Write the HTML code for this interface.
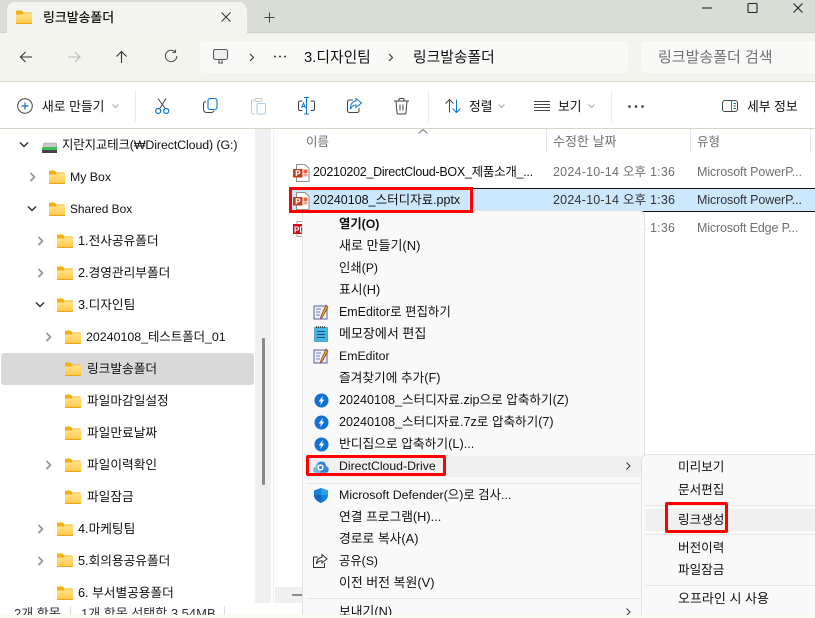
<!DOCTYPE html>
<html lang="ko"><head><meta charset="utf-8"><style>
html,body{margin:0;padding:0}
body{width:815px;height:618px;position:relative;overflow:hidden;background:#fff;font-family:"Liberation Sans","Noto Sans CJK KR",sans-serif;font-size:12.7px;color:#111}
.a{position:absolute}
.t{position:absolute;white-space:nowrap;line-height:18px;height:18px}
.m{font-size:12.8px}
.d{letter-spacing:.22px}
svg{position:absolute;overflow:visible}
.g{color:#707070}
</style></head><body>
<svg width="0" height="0" style="position:absolute"><defs>
<linearGradient id="fg" x1="0" y1="0" x2="0" y2="1"><stop offset="0" stop-color="#ffe28c"/><stop offset="1" stop-color="#fdc84a"/></linearGradient>
<symbol id="f" viewBox="0 0 16 14"><path d="M0 1.500Q0 .5 1 .5H5.500L7.500 2.500H15Q16 2.500 16 3.500V5H0Z" fill="#f6b015"/><path d="M0 4.500H6.500L8 3.300H16V12.500Q16 13.500 15 13.500H1Q0 13.500 0 12.500Z" fill="url(#fg)"/><path d="M0 12.800Q.2 13.500 1 13.500H15Q15.800 13.500 16 12.800" fill="none" stroke="#eea71a"/></symbol>
<symbol id="p" viewBox="0 0 20 18"><path d="M4.500 .5H13L17 4.500V17.500H4.500Z" fill="#fff" stroke="#8f8f8f"/><path d="M11.500 5.500H15.500V9H11.500Z" fill="#e8623a"/><path d="M11.500 9.500H15.500V12.500H11.500Z" fill="#f3a084"/><rect x="1" y="5" width="9.500" height="8.500" rx=".8" fill="#c43e1c"/><path d="M4.300 12V6.800H6Q7.800 6.800 7.800 8.300T6 9.800H4.300" fill="none" stroke="#fff" stroke-width="1.200"/></symbol>
<symbol id="b" viewBox="0 0 16 16"><circle cx="8" cy="8" r="7.500" fill="#1272d3"/><path d="M9.500 3L5 9H7.500L6.500 13L11 7H8.500Z" fill="#fff"/></symbol>
<symbol id="e" viewBox="0 0 16 16"><rect x="1" y="2" width="13" height="13" fill="#eef0fb" stroke="#5c5ca8"/><path d="M3 5H8M3 8H7M3 11H7" stroke="#7b7bb8"/><path d="M13 1L8 12L7.500 14.500L9.500 13L15 3Z" fill="#e8a33a" stroke="#7a3b10" stroke-width=".7"/></symbol>
<symbol id="r" viewBox="0 0 8 10"><path d="M1.500 1L5.500 5L1.500 9" fill="none" stroke="#8f8f8f" stroke-width="1.600"/></symbol>
<symbol id="d" viewBox="0 0 10 8"><path d="M1 1.500L5 5.500L9 1.500" fill="none" stroke="#333" stroke-width="1.500"/></symbol>
</defs></svg>

<!-- title bar -->
<div class="a" style="left:0;top:0;width:815px;height:33px;background:#d9ddd5"></div>
<div class="a" style="left:0;top:32px;width:815px;height:1px;background:#cfd1c6"></div>
<div class="a" style="left:7px;top:2px;width:240px;height:32px;background:#f3f4ef;border-radius:8px 8px 0 0"></div>
<svg style="left:16px;top:10px" width="16" height="14"><use href="#f" width="16" height="14"/></svg>
<div class="t" style="left:43px;top:9px;font-size:12.900px;font-weight:500">링크발송폴더</div>
<svg style="left:221px;top:12px" width="10" height="10"><path d="M.5.5L9.500 9.500M9.500.5L.5 9.500" stroke="#333"/></svg>
<svg style="left:264px;top:12px" width="11" height="11"><path d="M5.500.5V10.500M.5 5.500H10.500" stroke="#444"/></svg>
<svg style="left:702px;top:3px" width="100" height="14"><path d="M0 5H10" stroke="#222" stroke-width="1.100"/><rect x="46" y=".5" width="9" height="9" rx="1" fill="none" stroke="#222" stroke-width="1.100"/><path d="M91.500 .5L100.500 9.500M100.500 .5L91.500 9.500" stroke="#222" stroke-width="1.100"/></svg>

<!-- address row -->
<div class="a" style="left:0;top:33px;width:815px;height:48px;background:#f3f4ee"></div>
<div class="a" style="left:0;top:81px;width:815px;height:1px;background:#d5d6c9"></div>
<svg style="left:20px;top:50px" width="240" height="16">
<path d="M12 7H.5M5.500 2L.5 7L5.500 12" fill="none" stroke="#333" stroke-width="1.100"/>
<path d="M48 7H60M55 2L60 7L55 12" fill="none" stroke="#b8b8b8" stroke-width="1.100"/>
<path d="M101.500 13V1.500M96.500 6.500L101.500 1.500L106.500 6.500" fill="none" stroke="#333" stroke-width="1.100"/>
<path d="M155 1.800A5.700 5.700 0 1 0 156.800 6M155.500 -.5V2.500H152.500" fill="none" stroke="#555" stroke-width="1.100"/>
</svg>
<div class="a" style="left:200px;top:41px;width:428px;height:32px;background:#f9faf7;border-radius:4px"></div>
<div class="a" style="left:641px;top:41px;width:174px;height:32px;background:#f9faf7;border-radius:4px 0 0 4px"></div>
<svg style="left:213px;top:49px" width="16" height="16"><rect x=".5" y=".5" width="14" height="10" rx="2" fill="#f0f0f0" stroke="#5a5a5a" stroke-width="1.100"/><path d="M5 14H10M6 11V14M9 11V14" stroke="#5a5a5a" stroke-width="1.100"/></svg>
<svg style="left:249px;top:53px" width="6" height="9"><path d="M1 1L4.500 4.500L1 8" fill="none" stroke="#333" stroke-width="1.100"/></svg>
<svg style="left:274px;top:55px" width="12" height="3"><path d="M0 1.500H2M5 1.500H7M10 1.500H12" stroke="#333" stroke-width="1.500"/></svg>
<div class="t" style="left:304px;top:49px;font-size:14.800px">3.디자인팀</div>
<svg style="left:388px;top:53px" width="6" height="9"><path d="M1 1L4.500 4.500L1 8" fill="none" stroke="#333" stroke-width="1.100"/></svg>
<div class="t" style="left:413px;top:49px;font-size:14.800px">링크발송폴더</div>
<div class="t g" style="left:658px;top:49px;font-size:15px">링크발송폴더 검색</div>

<!-- toolbar -->
<div class="a" style="left:0;top:128px;width:815px;height:1px;background:#d5d6c9"></div>
<svg style="left:17px;top:98px" width="16" height="16"><circle cx="8" cy="8" r="7.300" fill="none" stroke="#444" stroke-width="1"/><path d="M8 4.500V11.500M4.500 8H11.500" stroke="#0a6fc4" stroke-width="1.200"/></svg>
<div class="t" style="left:42px;top:98px;font-size:12.800px">새로 만들기</div>
<svg style="left:112px;top:104px" width="7" height="5"><path d="M.5.5L3.500 3.500L6.500.5" fill="none" stroke="#a5a5a5"/></svg>
<div class="a" style="left:135px;top:90px;width:1px;height:32px;background:#ececec"></div>
<svg style="left:155px;top:98px" width="15" height="17"><path d="M3 .5L10.500 11M11 .5L4.500 11" fill="none" stroke="#444"/><circle cx="3.200" cy="13" r="2.500" fill="none" stroke="#0a78d4" stroke-width="1.200"/><circle cx="11.200" cy="13" r="2.500" fill="none" stroke="#0a78d4" stroke-width="1.200"/></svg>
<svg style="left:203px;top:98px" width="15" height="16"><rect x="5" y=".5" width="9" height="11" rx="2" fill="none" stroke="#0a78d4" stroke-width="1.100"/><path d="M3 3.500Q.5 4 .5 6V11Q.5 14.500 4 14.500H8Q10.500 14.500 11 12.500" fill="none" stroke="#444"/></svg>
<svg style="left:251px;top:98px" width="15" height="17"><path d="M4 2H2Q.5 2 .5 3.500V14.500Q.5 16 2 16H4" fill="none" stroke="#c9c9c9"/><rect x="4" y=".5" width="7" height="3" rx="1" fill="none" stroke="#c9c9c9"/><rect x="6" y="5.500" width="8.500" height="10.500" rx="1.500" fill="none" stroke="#a9cdea"/></svg>
<svg style="left:298px;top:97px" width="17" height="18"><path d="M4.500 4H2Q.5 4 .5 5.500V12Q.5 13.500 2 13.500H4.500M12.500 4H15Q16.500 4 16.500 5.500V12Q16.500 13.500 15 13.500H12.500" fill="none" stroke="#444"/><path d="M8.500.5V17M6 .5H11M6 17H11" fill="none" stroke="#0a78d4"/><path d="M3.500 11L5.500 6L7.500 11M4.200 9.500H6.800" fill="none" stroke="#0a78d4"/></svg>
<svg style="left:347px;top:98px" width="15" height="16"><path d="M6 2H2.500Q.5 2 .5 4V12.500Q.5 14.500 2.500 14.500H10Q12 14.500 12 12.500V10" fill="none" stroke="#444"/><path d="M9 .5L14.500 5L9 9.500V7Q5.500 7 3.500 11Q3.500 3.500 9 3Z" fill="none" stroke="#0a78d4"/></svg>
<svg style="left:394px;top:98px" width="16" height="17"><path d="M0 3H15M5 3V1.500Q5 .5 6 .5H9Q10 .5 10 1.500V3M2 3L3 14.500Q3 16 4.500 16H10.500Q12 16 12 14.500L13 3M6 6.500V12.500M9 6.500V12.500" fill="none" stroke="#444"/></svg>
<div class="a" style="left:428px;top:90px;width:1px;height:32px;background:#ececec"></div>
<svg style="left:445px;top:99px" width="17" height="14"><path d="M4.500 13.500V.5M.5 4.500L4.500.5L8.500 4.500" fill="none" stroke="#444"/><path d="M11.500.5V13.500M7.500 9.500L11.500 13.500L15.500 9.500" fill="none" stroke="#0a78d4"/></svg>
<div class="t" style="left:469px;top:98px;font-size:12.800px">정렬</div>
<svg style="left:498px;top:104px" width="7" height="5"><path d="M.5.5L3.500 3.500L6.500.5" fill="none" stroke="#a5a5a5"/></svg>
<svg style="left:534px;top:101px" width="16" height="10"><path d="M0 .5H16M0 3.500H16M0 6.500H16M0 9.500H16" stroke="#444"/></svg>
<div class="t" style="left:558px;top:98px;font-size:12.800px">보기</div>
<svg style="left:588px;top:104px" width="7" height="5"><path d="M.5.5L3.500 3.500L6.500.5" fill="none" stroke="#a5a5a5"/></svg>
<div class="a" style="left:611px;top:90px;width:1px;height:32px;background:#ececec"></div>
<svg style="left:628px;top:105px" width="16" height="3"><circle cx="1.500" cy="1.500" r="1.300" fill="#333"/><circle cx="8" cy="1.500" r="1.300" fill="#333"/><circle cx="14.500" cy="1.500" r="1.300" fill="#333"/></svg>
<svg style="left:722px;top:100px" width="16" height="12"><rect x=".5" y=".5" width="15" height="11" rx="2.500" fill="none" stroke="#444"/><path d="M9.500 .5V11.500" stroke="#0a78d4"/><path d="M11.500 3.500H14M11.500 6H14M11.500 8.500H14" stroke="#0a78d4"/></svg>
<div class="t" style="left:747px;top:98px;font-size:12.800px">세부 정보</div>

<!-- sidebar -->
<div class="a" style="left:255px;top:129px;width:16px;height:474px;background:#f0f0f0"></div>
<div class="a" style="left:262px;top:338px;width:3px;height:147px;background:#8a8a8a;border-radius:1px"></div>
<div class="a" style="left:273px;top:129px;width:1px;height:474px;background:#f1f1f1"></div>
<div class="a" style="left:1px;top:353px;width:253px;height:32px;background:#d9d9d9;border-radius:3px"></div>

<svg style="left:19px;top:141px" width="10" height="8"><use href="#d" width="10" height="8"/></svg>
<svg style="left:42px;top:142px" width="16" height="12"><rect x="1.500" y="1" width="13" height="5" rx="1" fill="#c9c9c9" stroke="#999" stroke-width=".6"/><rect x="0" y="5" width="15" height="3" fill="#3fbf5b"/><rect x="0" y="8" width="15" height="3" fill="#444"/></svg>
<div class="t" style="left:62px;top:136px;font-size:12.400px;letter-spacing:-.1px">지란지교테크(₩DirectCloud) (G:)</div>

<svg style="left:29px;top:172px" width="8" height="10"><use href="#r" width="8" height="10"/></svg>
<svg style="left:49px;top:170px" width="16" height="14"><use href="#f" width="16" height="14"/></svg>
<div class="t" style="left:70px;top:168px;font-size:12.300px">My Box</div>

<svg style="left:27px;top:205px" width="10" height="8"><use href="#d" width="10" height="8"/></svg>
<svg style="left:49px;top:202px" width="16" height="14"><use href="#f" width="16" height="14"/></svg>
<div class="t" style="left:70px;top:200px;font-size:11.900px">Shared Box</div>

<svg style="left:37px;top:236px" width="8" height="10"><use href="#r" width="8" height="10"/></svg>
<svg style="left:57px;top:234px" width="16" height="14"><use href="#f" width="16" height="14"/></svg>
<div class="t" style="left:78px;top:232px">1.전사공유폴더</div>

<svg style="left:37px;top:268px" width="8" height="10"><use href="#r" width="8" height="10"/></svg>
<svg style="left:57px;top:266px" width="16" height="14"><use href="#f" width="16" height="14"/></svg>
<div class="t" style="left:78px;top:264px">2.경영관리부폴더</div>

<svg style="left:35px;top:301px" width="10" height="8"><use href="#d" width="10" height="8"/></svg>
<svg style="left:57px;top:298px" width="16" height="14"><use href="#f" width="16" height="14"/></svg>
<div class="t" style="left:78px;top:296px">3.디자인팀</div>

<svg style="left:45px;top:332px" width="8" height="10"><use href="#r" width="8" height="10"/></svg>
<svg style="left:65px;top:330px" width="16" height="14"><use href="#f" width="16" height="14"/></svg>
<div class="t" style="left:86px;top:328px;font-size:12.400px">20240108_테스트폴더_01</div>

<svg style="left:65px;top:362px" width="16" height="14"><use href="#f" width="16" height="14"/></svg>
<div class="t" style="left:87px;top:360px">링크발송폴더</div>
<svg style="left:65px;top:394px" width="16" height="14"><use href="#f" width="16" height="14"/></svg>
<div class="t" style="left:87px;top:392px">파일마감일설정</div>
<svg style="left:65px;top:426px" width="16" height="14"><use href="#f" width="16" height="14"/></svg>
<div class="t" style="left:87px;top:424px">파일만료날짜</div>
<svg style="left:45px;top:460px" width="8" height="10"><use href="#r" width="8" height="10"/></svg>
<svg style="left:65px;top:458px" width="16" height="14"><use href="#f" width="16" height="14"/></svg>
<div class="t" style="left:87px;top:456px">파일이력확인</div>
<svg style="left:65px;top:490px" width="16" height="14"><use href="#f" width="16" height="14"/></svg>
<div class="t" style="left:87px;top:488px">파일잠금</div>

<svg style="left:37px;top:524px" width="8" height="10"><use href="#r" width="8" height="10"/></svg>
<svg style="left:57px;top:522px" width="16" height="14"><use href="#f" width="16" height="14"/></svg>
<div class="t" style="left:78px;top:520px">4.마케팅팀</div>
<svg style="left:37px;top:556px" width="8" height="10"><use href="#r" width="8" height="10"/></svg>
<svg style="left:57px;top:553px" width="16" height="14"><use href="#f" width="16" height="14"/></svg>
<div class="t" style="left:78px;top:552px">5.회의용공유폴더</div>
<svg style="left:57px;top:586px" width="16" height="14"><use href="#f" width="16" height="14"/></svg>
<div class="t" style="left:78px;top:584px">6. 부서별공용폴더</div>

<!-- list header -->
<svg style="left:418px;top:129px" width="10" height="5"><path d="M.5 4.500L5 .5L9.500 4.500" fill="none" stroke="#777"/></svg>
<div class="t g" style="left:306px;top:133px;font-size:12.500px">이름</div>
<div class="a" style="left:546px;top:129px;width:1px;height:24px;background:#e5e5e5"></div>
<div class="t g" style="left:553px;top:133px;font-size:13px">수정한 날짜</div>
<div class="a" style="left:690px;top:129px;width:1px;height:24px;background:#e5e5e5"></div>
<div class="t g" style="left:697px;top:133px;font-size:12.500px">유형</div>
<div class="a" style="left:810px;top:129px;width:1px;height:24px;background:#e5e5e5"></div>

<!-- rows -->
<svg style="left:292px;top:164px" width="20" height="18"><use href="#p" width="20" height="18"/></svg>
<div class="t" style="left:313px;top:163px;font-size:12.500px;letter-spacing:-.27px">20210202_DirectCloud-BOX_제품소개_...</div>
<div class="t g d" style="left:553px;top:163px;font-size:12.500px">2024-10-14 오후 1:36</div>
<div class="t g" style="left:697px;top:163px;font-size:12.500px;letter-spacing:-.1px">Microsoft PowerP...</div>

<div class="a" style="left:289px;top:188px;width:526px;height:22px;background:#cce8ff;border-top:1px solid #111;border-bottom:1px solid #111"></div>
<div class="t d" style="left:553px;top:191px;color:#333;font-size:12.500px">2024-10-14 오후 1:36</div>
<div class="t" style="left:697px;top:191px;color:#333;font-size:12.500px;letter-spacing:-.1px">Microsoft PowerP...</div>

<svg style="left:293px;top:221px" width="20" height="16"><path d="M4 .5H13V15.500H4Z" fill="#fff" stroke="#aaa"/><rect x="0" y="3" width="13" height="10" fill="#c8101a"/><text x="1" y="11.500" font-size="8" font-weight="bold" fill="#fff" font-family="Liberation Sans">PD</text></svg>
<div class="t g d" style="left:553px;top:219px;font-size:12.500px">2024-10-14 오후 1:36</div>
<div class="t g" style="left:697px;top:219px;font-size:12.500px;letter-spacing:-.15px">Microsoft Edge P...</div>

<!-- horizontal scroll + status -->
<div class="a" style="left:275px;top:587px;width:27px;height:16px;background:#f0f0f0"></div>
<div class="a" style="left:292px;top:594px;width:10px;height:2px;background:#8a8a8a"></div>
<div class="a" style="left:0;top:603px;width:815px;height:15px;overflow:hidden;background:#fff"><div class="t" style="left:14px;top:2px;font-size:13px;color:#333">2개 항목</div><div class="t" style="left:81px;top:2px;font-size:13px;color:#333">1개 항목 선택함 3.54MB</div><div class="a" style="left:70px;top:3px;width:1px;height:9px;background:#ddd"></div><div class="a" style="left:224px;top:3px;width:1px;height:9px;background:#ddd"></div></div>

<!-- context menu -->
<div class="a" style="left:302px;top:210px;width:343px;height:405px;background:#f9f9f9;border:1px solid #e3e3e3;border-bottom:0;box-sizing:border-box;border-radius:0 6px 0 0"></div>
<div class="t m" style="left:339px;top:215px;font-weight:bold;font-size:12.300px">열기(O)</div>
<div class="t m" style="left:339px;top:237px;font-size:13px">새로 만들기(N)</div>
<div class="t m" style="left:339px;top:259px;font-size:12.300px">인쇄(P)</div>
<div class="t m" style="left:339px;top:281px">표시(H)</div>
<svg style="left:313px;top:304px" width="16" height="16"><use href="#e" width="16" height="16"/></svg>
<div class="t" style="left:339px;top:303px;font-size:12.450px">EmEditor로 편집하기</div>
<svg style="left:314px;top:326px" width="14" height="16"><rect x=".5" y="1.500" width="13" height="14" fill="#45b6e8" stroke="#2a7fa8" stroke-width=".6"/><path d="M3 5.500H11M3 8.500H11M3 11.500H11" stroke="#12506e"/><path d="M2 1H12" stroke="#333" stroke-width="1.500" stroke-dasharray="1 1"/></svg>
<div class="t" style="left:339px;top:325px;font-size:13px">메모장에서 편집</div>
<svg style="left:313px;top:348px" width="16" height="16"><use href="#e" width="16" height="16"/></svg>
<div class="t" style="left:339px;top:347px;font-size:12.300px">EmEditor</div>
<div class="t" style="left:339px;top:369px;font-size:12.700px">즐겨찾기에 추가(F)</div>
<svg style="left:314px;top:393px" width="15" height="15"><use href="#b" width="15" height="15"/></svg>
<div class="t" style="left:339px;top:391px;font-size:12.600px">20240108_스터디자료.zip으로 압축하기(Z)</div>
<svg style="left:314px;top:415px" width="15" height="15"><use href="#b" width="15" height="15"/></svg>
<div class="t" style="left:339px;top:413px;font-size:12.600px">20240108_스터디자료.7z로 압축하기(7)</div>
<svg style="left:314px;top:437px" width="15" height="15"><use href="#b" width="15" height="15"/></svg>
<div class="t" style="left:339px;top:435px;font-size:12.750px">반디집으로 압축하기(L)...</div>

<div class="a" style="left:306px;top:456px;width:335px;height:21px;background:#f0f0f0;border-radius:3px"></div>
<svg style="left:313px;top:461px" width="16" height="12"><path d="M3 11.800Q0 11.500 .3 8.500Q.6 6 2.800 6Q3.500 .5 8.500 .5Q12.800 .5 13 5Q16 6 15.700 9Q15.300 11.800 12.500 11.800Z" fill="#2f86dc"/><path d="M3 11.800Q0 11.500 .3 8.500Q.6 6 2.800 6Q3 3 5 1.800L7.500 11.800Z" fill="#76b4ec"/><circle cx="7.500" cy="6.500" r="2.400" fill="none" stroke="#fff" stroke-width="1.500"/></svg>
<div class="t" style="left:339px;top:457px;font-size:12.250px">DirectCloud-Drive</div>
<svg style="left:626px;top:462px" width="5" height="8"><path d="M.5.5L4 4L.5 7.500" fill="none" stroke="#333"/></svg>
<div class="a" style="left:306px;top:455px;width:134px;height:15px;border:3px solid #f00;border-radius:2px"></div>

<div class="a" style="left:307px;top:483px;width:333px;height:1px;background:#e5e5e5"></div>
<svg style="left:314px;top:488px" width="14" height="15"><path d="M7 0L14 2.500V7Q14 12 7 15Q0 12 0 7V2.500Z" fill="#1580d8"/><path d="M7 0L14 2.500V7H7Z" fill="#2ea2e8"/><path d="M7 7H0Q0 12 7 15Z" fill="#0e6cc0"/></svg>
<div class="t" style="left:339px;top:486px;font-size:12.400px">Microsoft Defender(으)로 검사...</div>
<div class="t" style="left:339px;top:508px;font-size:12.750px">연결 프로그램(H)...</div>
<div class="t m" style="left:339px;top:530px">경로로 복사(A)</div>
<svg style="left:313px;top:554px" width="15" height="14"><path d="M5 3H.5V13.500H11.500V9" fill="none" stroke="#333"/><path d="M9 .5L14 5L9 9V6.800Q5 6.800 3.500 10Q3.500 3.800 9 3.200Z" fill="none" stroke="#333"/></svg>
<div class="t" style="left:339px;top:552px;font-size:12.300px">공유(S)</div>
<div class="t" style="left:339px;top:574px;font-size:12.900px">이전 버전 복원(V)</div>
<div class="a" style="left:307px;top:598px;width:333px;height:1px;background:#e5e5e5"></div>
<div class="a" style="left:303px;top:600px;width:336px;height:15px;overflow:hidden"><div class="t m" style="left:36px;top:3px">보내기(N)</div></div>
<svg style="left:626px;top:608px" width="5" height="8"><path d="M.5.5L4 4L.5 7.500" fill="none" stroke="#333"/></svg>

<!-- selected file name + red box sit above the menu -->
<svg style="left:292px;top:192px" width="20" height="18"><use href="#p" width="20" height="18"/></svg>
<div class="t" style="left:313px;top:191px;font-size:12.500px">20240108_스터디자료.pptx</div>
<div class="a" style="left:289px;top:187px;width:178px;height:20px;border:3px solid #f00"></div>

<!-- submenu -->
<div class="a" style="left:641px;top:454px;width:174px;height:161px;background:#f9f9f9;border:1px solid #e3e3e3;border-right:0;border-bottom:0;box-sizing:border-box;border-radius:6px 0 0 0"></div>
<div class="t" style="left:678px;top:458px;font-size:12.600px">미리보기</div>
<div class="t" style="left:678px;top:481px;font-size:12.600px">문서편집</div>
<div class="a" style="left:645px;top:505px;width:170px;height:1px;background:#e5e5e5"></div>
<div class="a" style="left:645px;top:509px;width:170px;height:22px;background:#f0f0f0;border-radius:3px 0 0 3px"></div>
<div class="t" style="left:678px;top:511px;font-size:12.600px">링크생성</div>
<div class="a" style="left:665px;top:502px;width:57px;height:25px;border:3px solid #f00;border-radius:2px"></div>
<div class="a" style="left:645px;top:534px;width:170px;height:1px;background:#e5e5e5"></div>
<div class="t" style="left:678px;top:539px;font-size:12.600px">버전이력</div>
<div class="t" style="left:678px;top:561px;font-size:12.600px">파일잠금</div>
<div class="a" style="left:645px;top:585px;width:170px;height:1px;background:#e5e5e5"></div>
<div class="t" style="left:678px;top:590px;font-size:13px">오프라인 시 사용</div>

<div class="a" style="left:0;top:615px;width:815px;height:3px;background:#fbfcf0"></div>
</body></html>
